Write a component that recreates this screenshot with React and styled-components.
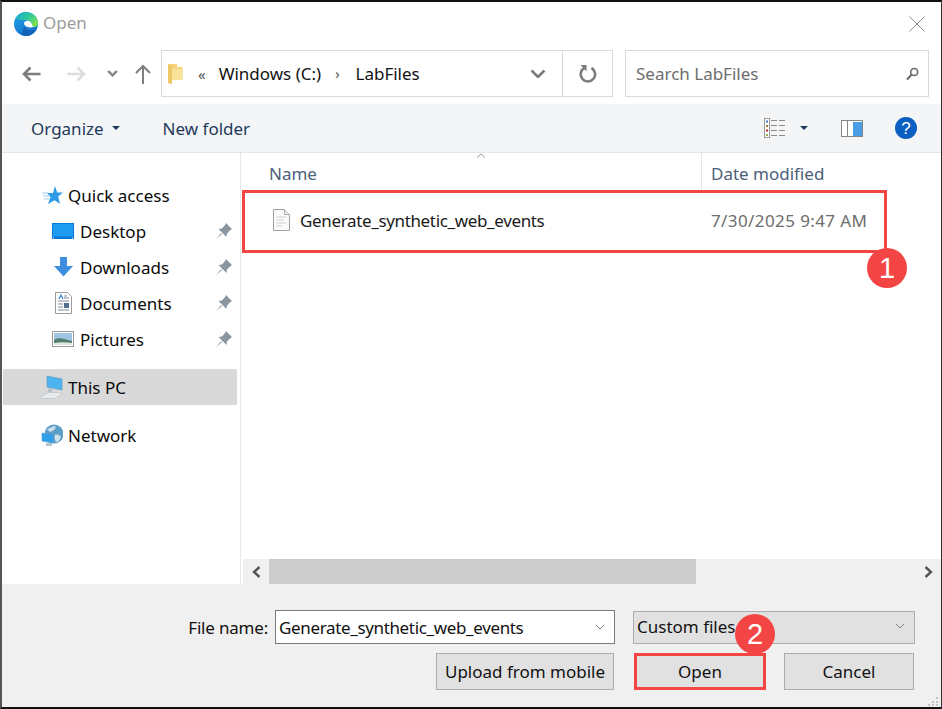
import React from 'react';
import styled, { createGlobalStyle } from 'styled-components';

const GlobalStyle = createGlobalStyle`
  html, body {
    margin: 0;
    padding: 0;
    background: #fff;
    font-family: "Noto Sans", "Open Sans", sans-serif;
  }
`

const Dialog = styled.div`
  position: relative;
  box-sizing: border-box;
  width: 942px;
  height: 709px;
  display: flex;
  flex-direction: column;
  background: #fff;
  border-top: 2px solid #111;
  border-left: 2px solid #555;
  border-bottom: 2px solid #111;
  border-right: 1px solid #333;
  overflow: hidden;
`

//// ---- TITLE ----

const TitleBar = styled.div`
  height: 48px;
  flex: none;
  box-sizing: border-box;
  display: flex;
  align-items: center;
  padding: 0 16px 4px 12px;
  color: #9b9b9b;
  font-size: 17px;
  line-height: 22px;
  svg:first-child { margin-right: 5px; }
  svg:last-child { margin-left: auto; }
`

const TitleText = styled.span`
  margin-top: -2px;
`

//// ---- NAV ----

const NavBar = styled.div`
  height: 54px;
  flex: none;
  display: flex;
  align-items: flex-start;
  padding-left: 18px;
`

const NavIcons = styled.div`
  width: 141px;
  height: 47px;
  display: flex;
  align-items: center;
`

const IconSlot = styled.span`
  display: flex;
  flex: none;
  margin-left: ${p => p.$left || 0}px;
  transform: ${p => p.$flip ? 'scaleX(-1)' : 'none'};
`

const AddressBox = styled.div`
  box-sizing: border-box;
  width: 452px;
  height: 47px;
  display: flex;
  align-items: center;
  border: 1px solid #d9d9d9;
  font-size: 17px;
  color: #111;
`

const Crumbs = styled.div`
  flex: 1;
  display: flex;
  align-items: center;
  padding-left: 6px;
  white-space: nowrap;
`

const CrumbSep = styled.span`
  color: #555;
  font-size: ${p => p.$size || 15}px;
  margin: ${p => p.$margin};
`

const AddressAction = styled.div`
  width: ${p => p.$width}px;
  height: 100%;
  box-sizing: border-box;
  display: flex;
  align-items: center;
  justify-content: center;
  border-left: ${p => p.$divider ? '1px solid #d9d9d9' : 'none'};
`

const SearchBox = styled.div`
  box-sizing: border-box;
  width: 304px;
  height: 47px;
  margin-left: 12px;
  display: flex;
  align-items: center;
  justify-content: space-between;
  padding: 0 9px 0 10px;
  border: 1px solid #d9d9d9;
  color: #6d6d6d;
  font-size: 17px;
`

//// ---- TOOLBAR ----

const Toolbar = styled.div`
  height: 49px;
  flex: none;
  box-sizing: border-box;
  display: flex;
  align-items: center;
  padding: 0 24px 0 29px;
  background: #f3f5f7;
  border-bottom: 1px solid #e3e5e8;
  color: #1e395b;
  font-size: 17px;
`

const ToolLabel = styled.span`
  display: flex;
  align-items: center;
  margin-right: ${p => p.$gap || 0}px;
`

const Caret = styled.span`
  width: 0;
  height: 0;
  margin-left: ${p => p.$left || 0}px;
  margin-right: ${p => p.$right || 0}px;
  border-left: 4px solid transparent;
  border-right: 4px solid transparent;
  border-top: 4px solid #1e395b;
`

const ToolIcons = styled.div`
  margin-left: auto;
  display: flex;
  align-items: center;
`

//// ---- MAIN ----

const Main = styled.div`
  flex: 1;
  min-height: 0;
  display: flex;
`

const Sidebar = styled.div`
  width: 234px;
  flex: none;
  padding: 24px 3px 0 1px;
  margin-right: 2px;
  border-right: 1px solid #e8e8e8;
`

const NavRow = styled.div`
  height: 36px;
  display: flex;
  align-items: center;
  padding-left: ${p => p.$indent}px;
  margin-top: ${p => p.$top || 0}px;
  background: ${p => p.$selected ? '#d9d9d9' : 'transparent'};
  color: #0a0a0a;
  font-size: 17px;
`

const NavIcon = styled.span`
  width: ${p => p.$width}px;
  flex: none;
  display: flex;
  align-items: center;
  justify-content: ${p => p.$center ? 'center' : 'flex-start'};
  margin-right: ${p => p.$gap}px;
`

const Pin = styled.span`
  margin-left: auto;
  margin-right: 5px;
  display: flex;
`

const Content = styled.div`
  flex: 1;
  min-width: 0;
  display: flex;
  flex-direction: column;
`

const FileList = styled.div`
  flex: 1;
`

const HeaderRow = styled.div`
  position: relative;
  height: 37px;
  display: flex;
  color: #4c607a;
  font-size: 17px;
`

const HeaderCell = styled.div`
  box-sizing: border-box;
  width: ${p => p.$width}px;
  padding: 9px 0 0 ${p => p.$pad}px;
  border-right: ${p => p.$divider ? '1px solid #e5e5e5' : 'none'};
`

const SortMark = styled.svg`
  position: absolute;
  left: 233px;
  top: 0;
`

const FileRow = styled.div`
  height: 60px;
  display: flex;
  align-items: center;
  font-size: 17px;
  color: #1a1a1a;
`

const FileName = styled.div`
  width: 468px;
  box-sizing: border-box;
  padding-left: 30px;
  display: flex;
  align-items: center;
  gap: 10px;
`

const FileText = styled.span`
  letter-spacing: -0.35px;
`

const FileDate = styled.div`
  color: #6d6d6d;
  letter-spacing: 0.4px;
`

const ScrollBar = styled.div`
  height: 25px;
  flex: none;
  display: flex;
  align-items: center;
  background: #f0f0f0;
`

const ScrollButton = styled.div`
  width: 26px;
  height: 100%;
  flex: none;
  display: flex;
  align-items: center;
  justify-content: center;
`

const ScrollTrack = styled.div`
  flex: 1;
  height: 100%;
`

const ScrollThumb = styled.div`
  width: 427px;
  height: 100%;
  background: #cdcdcd;
`

//// ---- FOOTER ----

const Footer = styled.div`
  position: relative;
  height: 123px;
  flex: none;
  box-sizing: border-box;
  background: #f0f0f0;
  padding: 26px 26px 0 0;
  display: flex;
  flex-direction: column;
  gap: 9px;
  font-size: 17px;
  color: #111;
`

const FooterRow = styled.div`
  display: flex;
  align-items: center;
  justify-content: flex-end;
  padding-right: ${p => p.$right || 0}px;
`

const FieldLabel = styled.span`
  margin-right: 7px;
  letter-spacing: -0.2px;
`

const NameField = styled.div`
  box-sizing: border-box;
  width: 340px;
  height: 34px;
  display: flex;
  align-items: center;
  justify-content: space-between;
  padding: 0 9px 0 3px;
  background: #fff;
  border: 1px solid #7a7a7a;
`

const TypeField = styled.div`
  box-sizing: border-box;
  width: 282px;
  height: 33px;
  margin-left: 18px;
  display: flex;
  align-items: center;
  justify-content: space-between;
  padding: 0 9px 2px 3px;
  background: #e1e1e1;
  border: 1px solid #adadad;
`

const Button = styled.div`
  box-sizing: border-box;
  width: ${p => p.$width}px;
  height: 37px;
  margin-left: ${p => p.$left || 0}px;
  display: flex;
  align-items: center;
  justify-content: center;
  background: #e1e1e1;
  border: ${p => p.$marked ? '3px solid #f44545' : '1px solid #adadad'};
`

const Grip = styled.svg`
  position: absolute;
  right: 2px;
  bottom: 1px;
`

//// ---- ANNOTATIONS ----

const Highlight = styled.div`
  position: absolute;
  left: 240px;
  top: 188px;
  width: 645px;
  height: 63px;
  box-sizing: border-box;
  border: 3px solid #f44545;
`

const Badge = styled.div`
  position: absolute;
  left: ${p => p.$x}px;
  top: ${p => p.$y}px;
  width: 40px;
  height: 40px;
  border-radius: 50%;
  display: flex;
  align-items: center;
  justify-content: center;
  background: #f44545;
  color: #fff;
  font-family: "Liberation Sans", sans-serif;
  font-size: 29px;
`

//// ---- ICONS ----

const EdgeIcon = () => (
  <svg width="24" height="24" viewBox="0 0 24 24">
    <defs>
      <linearGradient id="edgeTop" x1="0" y1="0" x2="1" y2="0.6">
        <stop offset="0" stopColor="#1ba6d6" />
        <stop offset="0.55" stopColor="#2ccaa0" />
        <stop offset="1" stopColor="#7ade4e" />
      </linearGradient>
      <linearGradient id="edgeLeft" x1="0" y1="0" x2="0.6" y2="1">
        <stop offset="0" stopColor="#25a8ea" />
        <stop offset="1" stopColor="#1470cc" />
      </linearGradient>
    </defs>
    <circle cx="12" cy="12" r="12" fill="url(#edgeLeft)" />
    <path d="M1.500 6.500C4 2 8 0 12 0c7 0 12 5 12 11.500 0 2.500-2 4-4.500 3.500-1.500-.3-2-1-1.500-2.500C18 9.500 15 8 11 8 7 8 3.500 7.500 1.500 6.500z" fill="url(#edgeTop)" />
    <path d="M11 9.500C14 7.500 17.500 9.500 18 12.500c.2 1 .7 2 2 2.300-2.500 1-6.500.8-8.500-.8-1.600-1.300-2-3.300-.5-4.500z" fill="#fff" />
    <path d="M10 13c.5 4 4 6 7.500 5.500 2-.3 3.500-1.200 4.500-2.500-1.600 4.500-5.500 8-10 8-2.500 0-4-1-5-2.500C9 20 10 16 10 13z" fill="#1462b8" />
  </svg>
)

const CloseIcon = () => (
  <svg width="16" height="16" viewBox="0 0 16 16">
    <path d="M.5.5l15 15M15.500.5l-15 15" stroke="#8f8f8f" strokeWidth="1" fill="none" />
  </svg>
)

const Arrow = ({ color }) => (
  <svg width="19" height="16" viewBox="0 0 19 16">
    <path d="M18.500 8H2M8.500 1.500L2 8l6.500 6.500" stroke={color} strokeWidth="2.600" fill="none" />
  </svg>
)

const UpArrow = () => (
  <svg width="16" height="20" viewBox="0 0 16 20">
    <path d="M8 20V2M1 9l7-7 7 7" stroke="#7d7d7d" strokeWidth="2" fill="none" />
  </svg>
)

const HistoryChevron = () => (
  <svg width="11" height="8" viewBox="0 0 11 8">
    <path d="M1 1l4.500 4.500L10 1" stroke="#808080" strokeWidth="2" fill="none" />
    <path d="M3 1l2.500 2.500L8 1" stroke="#c0c0c0" strokeWidth="1" fill="none" />
  </svg>
)

const FolderIcon = () => (
  <svg width="15" height="22" viewBox="0 0 15 22">
    <path d="M0 1h9v3h5.500v13L4 17v4l-4-1z" fill="#f3d27a" />
    <path d="M4 17V6h10.500v11z" fill="#f9e39b" />
    <path d="M0 1l4 3v17l-4-1z" fill="#eec868" />
  </svg>
)

const Chevron = ({ color = '#7a7a7a', size = 16, width = 2.600 }) => (
  <svg width={size} height={size * 0.62} viewBox="0 0 16 10">
    <path d="M1.500 1.500L8 8l6.500-6.500" stroke={color} strokeWidth={width} fill="none" />
  </svg>
)

const RefreshIcon = () => (
  <svg width="18" height="19" viewBox="0 0 18 19">
    <path d="M5 4.200A7.200 7.200 0 1 0 12.500 4" stroke="#7d7d7d" strokeWidth="2.600" fill="none" />
    <path d="M1.500 1h6v6.500z" fill="#7d7d7d" />
  </svg>
)

const SearchIcon = () => (
  <svg width="13" height="14" viewBox="0 0 13 14">
    <circle cx="8.200" cy="5" r="3.500" stroke="#6a6a6a" strokeWidth="1.600" fill="none" />
    <path d="M5.500 7.800L1 12.500" stroke="#6a6a6a" strokeWidth="2.200" />
  </svg>
)

const ViewsIcon = () => (
  <svg width="22" height="20" viewBox="0 0 22 20">
    <rect x=".5" y=".5" width="5" height="19" fill="#fff" stroke="#9a9a9a" />
    <rect x="2" y="2.500" width="2" height="2" fill="#3f7fc0" />
    <rect x="2" y="7" width="2" height="2" fill="#a87a3a" />
    <rect x="2" y="11.500" width="2" height="2" fill="#c02a2a" />
    <rect x="2" y="16" width="2" height="2" fill="#9ab04a" />
    <path d="M7 2.500h6M15 2.500h6M7 7.500h6M15 7.500h6M7 12.500h6M15 12.500h6M7 17.500h6M15 17.500h6" stroke="#8a8a8a" strokeWidth="1" />
  </svg>
)

const PaneIcon = () => (
  <svg width="22" height="17" viewBox="0 0 22 17">
    <rect x=".5" y=".5" width="21" height="16" fill="#fff" stroke="#858585" />
    <rect x="6" y="1" width="1" height="15" fill="#858585" />
    <rect x="12" y="2" width="9" height="14" fill="#4a9ee6" />
  </svg>
)

const HelpIcon = () => (
  <svg width="22" height="22" viewBox="0 0 22 22">
    <circle cx="11" cy="11" r="11" fill="#0b5fc0" />
    <text x="11" y="17" textAnchor="middle" fontFamily="Liberation Sans" fontSize="17" fill="#fff">?</text>
  </svg>
)

const StarIcon = () => (
  <svg width="21" height="19" viewBox="0 0 21 19">
    <path d="M13 0l2.200 6.500H21l-4.800 4L18 18l-5.500-3.800L6 18l2.500-7L5 7h6z" fill="#2e9be8" />
    <path d="M0 7h6M1 10h7M2 13h5" stroke="#9fd0f2" strokeWidth="1" />
  </svg>
)

const DesktopIcon = () => (
  <svg width="22" height="16" viewBox="0 0 22 16">
    <rect width="22" height="16" fill="#0a77d4" />
    <rect x="1" y="1" width="20" height="12.500" fill="#1f9cf0" />
    <path d="M1 15h1M20 15h1" stroke="#fff" />
  </svg>
)

const DownloadIcon = () => (
  <svg width="19" height="20" viewBox="0 0 19 20">
    <path d="M6 0h7v9h6l-9.500 10.500L0 9h6z" fill="#3f8fe0" />
  </svg>
)

const DocumentIcon = () => (
  <svg width="17" height="22" viewBox="0 0 17 22">
    <path d="M.5.500h12l4 4v17H.500z" fill="#fff" stroke="#9a9a9a" />
    <path d="M4 7l2-4 2 4" stroke="#2f7fd0" strokeWidth="1.200" fill="none" />
    <path d="M9 4h3M9 6h5M3 9h11M3 12h5M3 15h5M3 18h11" stroke="#7f8a96" strokeWidth="1" />
    <rect x="9" y="11" width="5" height="5" fill="#4f6f8f" />
  </svg>
)

const PicturesIcon = () => (
  <svg width="22" height="16" viewBox="0 0 22 16">
    <rect x=".5" y=".5" width="21" height="15" fill="#fff" stroke="#999" />
    <rect x="2" y="2" width="18" height="12" fill="#9fc4e4" />
    <path d="M2 9c4-3 8-2 18 1v4H2z" fill="#4f7f70" />
    <path d="M2 12c6-1 12-1 18 0v2H2z" fill="#dfe8e0" />
  </svg>
)

const PinIcon = () => (
  <svg width="16" height="16" viewBox="0 0 16 16">
    <path d="M10 0l6 6-1.500 1-3.500 3.500-.5 3.500-8-8 3.500-.5L9 2z" fill="#8c96a0" />
    <path d="M5 10L0 16l6-4.500z" fill="#aab2ba" />
  </svg>
)

const ComputerIcon = () => (
  <svg width="23" height="24" viewBox="0 0 23 24">
    <path d="M7 1l15 3v11L7 12z" fill="#4cb4ee" stroke="#6a9fc4" strokeWidth=".8" />
    <path d="M8 13l4 1v3H8z" fill="#b8c4cc" />
    <path d="M.5 21.500l8-4h10l4 1-7 5H1.500z" fill="#e8ebee" stroke="#b4b8bc" strokeWidth=".6" />
  </svg>
)

const NetworkIcon = () => (
  <svg width="22" height="23" viewBox="0 0 22 23">
    <circle cx="13" cy="10" r="9.500" fill="#5b9fc8" />
    <path d="M6 5c3 0 5-3 8-3 2 2-1 4-3 5-2 2-3 0-5-2zM14 11c2-1 5 0 6 2-1 3-3 5-5 5-1-2-2-4-1-7z" fill="#cfe0ea" />
    <path d="M1 9l11 2v8l-11-2z" fill="#2ca0ea" stroke="#5a9ac8" strokeWidth=".6" />
    <path d="M5 19h6v3H5z" fill="#b8c4cc" />
  </svg>
)

const FileIcon = () => (
  <svg width="17" height="22" viewBox="0 0 17 22">
    <path d="M.500.500h11l5 5v16H.500z" fill="#fafafa" stroke="#a0a0a0" />
    <path d="M11.500.500v5h5" fill="#e8e8e8" stroke="#b0b0b0" />
    <path d="M3.500 8h10M3.500 11h7M3.500 14h10M3.500 17h6" stroke="#d0d0d0" strokeWidth="1.200" />
  </svg>
)

const ScrollArrow = () => (
  <svg width="9" height="12" viewBox="0 0 9 12">
    <path d="M7.500 1L2 6l5.500 5" stroke="#555" strokeWidth="2.400" fill="none" />
  </svg>
)

const childIcon = { $width: 22, $gap: 6, $center: true }

const sidebarItems = [
  { label: 'Quick access', icon: <StarIcon />, indent: 39, iconProps: { $width: 26, $gap: 0 } },
  { label: 'Desktop', icon: <DesktopIcon />, indent: 49, iconProps: childIcon, pin: true },
  { label: 'Downloads', icon: <DownloadIcon />, indent: 49, iconProps: childIcon, pin: true },
  { label: 'Documents', icon: <DocumentIcon />, indent: 49, iconProps: childIcon, pin: true },
  { label: 'Pictures', icon: <PicturesIcon />, indent: 49, iconProps: childIcon, pin: true },
  { label: 'This PC', icon: <ComputerIcon />, indent: 37, iconProps: { $width: 28, $gap: 0 }, selected: true, top: 12 },
  { label: 'Network', icon: <NetworkIcon />, indent: 38, iconProps: { $width: 27, $gap: 0 }, top: 12 },
]

function App() {
  return (
    <Dialog>
      <GlobalStyle />

      <TitleBar>
        <EdgeIcon />
        <TitleText>Open</TitleText>
        <CloseIcon />
      </TitleBar>

      <NavBar>
        <NavIcons>
          <IconSlot $left={2}><Arrow color="#7d7d7d" /></IconSlot>
          <IconSlot $left={26} $flip><Arrow color="#dcdcdc" /></IconSlot>
          <IconSlot $left={21}><HistoryChevron /></IconSlot>
          <IconSlot $left={17}><UpArrow /></IconSlot>
        </NavIcons>
        <AddressBox>
          <Crumbs>
            <FolderIcon />
            <CrumbSep $margin="0 13px 0 15px">«</CrumbSep>
            Windows (C:)
            <CrumbSep $margin="0 16px 0 14px" $size={14}>›</CrumbSep>
            LabFiles
          </Crumbs>
          <AddressAction $width={49}><Chevron /></AddressAction>
          <AddressAction $width={50} $divider><RefreshIcon /></AddressAction>
        </AddressBox>
        <SearchBox>
          Search LabFiles
          <SearchIcon />
        </SearchBox>
      </NavBar>

      <Toolbar>
        <ToolLabel $gap={43}>Organize<Caret $left={8} /></ToolLabel>
        <ToolLabel>New folder</ToolLabel>
        <ToolIcons>
          <ViewsIcon />
          <Caret $left={14} $right={33} />
          <PaneIcon />
          <IconSlot $left={32}><HelpIcon /></IconSlot>
        </ToolIcons>
      </Toolbar>

      <Main>
        <Sidebar>
          {sidebarItems.map(item => (
            <NavRow key={item.label} $indent={item.indent} $selected={item.selected} $top={item.top}>
              <NavIcon {...item.iconProps}>{item.icon}</NavIcon>
              {item.label}
              {item.pin && <Pin><PinIcon /></Pin>}
            </NavRow>
          ))}
        </Sidebar>

        <Content>
          <FileList>
            <HeaderRow>
              <HeaderCell $width={459} $pad={26} $divider>Name</HeaderCell>
              <HeaderCell $width={238} $pad={9}>Date modified</HeaderCell>
              <SortMark width="10" height="5" viewBox="0 0 10 5">
                <path d="M1 4.500L5 1l4 3.500" stroke="#9a9a9a" fill="none" />
              </SortMark>
            </HeaderRow>
            <FileRow>
              <FileName>
                <FileIcon />
                <FileText>Generate_synthetic_web_events</FileText>
              </FileName>
              <FileDate>7/30/2025 9:47 AM</FileDate>
            </FileRow>
          </FileList>
          <ScrollBar>
            <ScrollButton><ScrollArrow /></ScrollButton>
            <ScrollTrack><ScrollThumb /></ScrollTrack>
            <ScrollButton><IconSlot $flip><ScrollArrow /></IconSlot></ScrollButton>
          </ScrollBar>
        </Content>
      </Main>

      <Footer>
        <FooterRow>
          <FieldLabel>File name:</FieldLabel>
          <NameField>
            <FileText>Generate_synthetic_web_events</FileText>
            <Chevron color="#777" size={10} width={1.500} />
          </NameField>
          <TypeField>
            Custom files
            <Chevron color="#777" size={10} width={1.500} />
          </TypeField>
        </FooterRow>
        <FooterRow $right={1}>
          <Button $width={178}>Upload from mobile</Button>
          <Button $width={132} $left={20} $marked>Open</Button>
          <Button $width={130} $left={18}>Cancel</Button>
        </FooterRow>
        <Grip width="12" height="10" viewBox="0 0 12 10">
          <path d="M9 1h2v2H9zM5 5h2v2H5zM9 5h2v2H9zM1 8h2v2H1zM5 8h2v2H5zM9 8h2v2H9z" fill="#c4c4c4" />
        </Grip>
      </Footer>

      <Highlight />
      <Badge $x={865} $y={246}>1</Badge>
      <Badge $x={733} $y={612}>2</Badge>
    </Dialog>
  );
}

export default App;
